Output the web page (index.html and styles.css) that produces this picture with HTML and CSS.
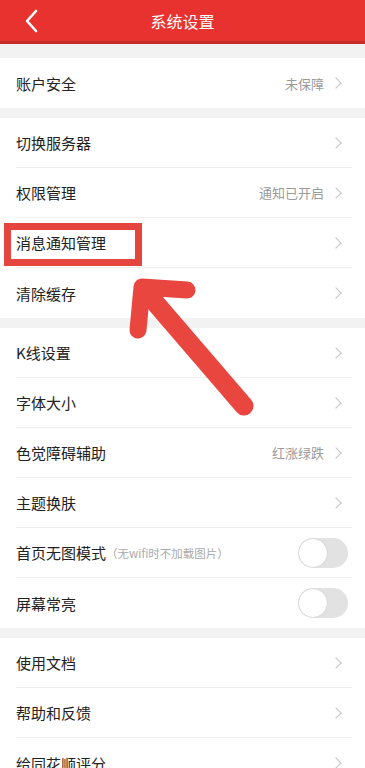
FILE: index.html
```html
<!DOCTYPE html>
<html lang="zh">
<head>
<meta charset="utf-8">
<link rel="stylesheet" href="styles.css">
</head>
<body>
<div class="page">
  <header class="topbar">
    <svg class="back" width="14" height="24" viewBox="0 0 14 24"><path d="M12 2 L3 12 L12 22" fill="none" stroke="#fff" stroke-width="2.6" stroke-linecap="round" stroke-linejoin="round"/></svg>
    <div class="title">系统设置</div>
  </header>

  <section class="group">
    <div class="row"><span class="label">账户安全</span><span class="value">未保障</span><span class="chev"></span></div>
  </section>

  <section class="group">
    <div class="row"><span class="label">切换服务器</span><span class="chev"></span></div>
    <div class="row"><span class="label">权限管理</span><span class="value">通知已开启</span><span class="chev"></span></div>
    <div class="row"><span class="label">消息通知管理</span><span class="chev"></span></div>
    <div class="row"><span class="label">清除缓存</span><span class="chev"></span></div>
  </section>

  <section class="group">
    <div class="row"><span class="label">K线设置</span><span class="chev"></span></div>
    <div class="row"><span class="label">字体大小</span><span class="chev"></span></div>
    <div class="row"><span class="label">色觉障碍辅助</span><span class="value">红涨绿跌</span><span class="chev"></span></div>
    <div class="row"><span class="label">主题换肤</span><span class="chev"></span></div>
    <div class="row"><span class="label">首页无图模式<small class="hint">（无wifi时不加载图片）</small></span><span class="toggle"></span></div>
    <div class="row"><span class="label">屏幕常亮</span><span class="toggle"></span></div>
  </section>

  <section class="group">
    <div class="row"><span class="label">使用文档</span><span class="chev"></span></div>
    <div class="row"><span class="label">帮助和反馈</span><span class="chev"></span></div>
    <div class="row"><span class="label">给同花顺评分</span><span class="chev"></span></div>
  </section>

  <div class="highlight"></div>
  <svg class="arrow" width="365" height="768" viewBox="0 0 365 768">
    <g fill="none" stroke="#e8463f" stroke-linecap="round" stroke-linejoin="round">
      <path d="M244 406 L146 292" stroke-width="19"/>
      <path d="M187 290 L142 287 L138 330" stroke-width="17"/>
    </g>
  </svg>
</div>
</body>
</html>
```

FILE: styles.css
```css
* { box-sizing: border-box; }
html, body { margin: 0; padding: 0; }
body {
  background: #f2f2f2;
  font-family: "Noto Sans CJK SC", "Noto Sans", sans-serif;
  width: 365px;
  height: 768px;
  overflow: hidden;
}
.page { position: relative; }
.topbar {
  height: 44px;
  background: #e8322f;
  border-bottom: 3px solid #c32c2a;
  display: flex;
  align-items: center;
  justify-content: center;
  position: relative;
}
.back {
  position: absolute;
  left: 24px;
  top: 9px;
}
.title {
  color: #fff;
  font-size: 16px;
  line-height: 20px;
}
.group {
  background: #fff;
  margin-top: 10px;
}
.group:first-of-type { margin-top: 14px; }
.row {
  height: 50px;
  display: flex;
  align-items: center;
  margin-left: 16px;
  margin-right: 13px;
  padding-right: 4px;
  border-bottom: 1px solid #efefef;
}
.group .row:last-child { border-bottom: none; }
.label {
  flex: 1;
  font-size: 15px;
  color: #222;
  display: flex;
  align-items: center;
}
.hint {
  font-size: 11.5px;
  color: #aaa;
  margin-left: 0;
}
.value {
  font-size: 13px;
  color: #9a9a9a;
  margin-right: 8px;
}
.chev {
  width: 8px;
  height: 8px;
  border-top: 1.5px solid #c4c4c4;
  border-right: 1.5px solid #c4c4c4;
  transform: rotate(45deg);
  margin-right: 8px;
}
.toggle {
  width: 50px;
  height: 30px;
  border-radius: 15px;
  background: #e2e2e2;
  position: relative;
}
.toggle::after {
  content: "";
  position: absolute;
  left: 1px;
  top: 1px;
  width: 28px;
  height: 28px;
  border-radius: 50%;
  background: #fff;
  box-shadow: 0 0 1px rgba(0,0,0,0.25);
}
.highlight {
  position: absolute;
  left: 4px;
  top: 223px;
  width: 138px;
  height: 43px;
  border: 7px solid #e5453f;
}
.arrow {
  position: absolute;
  left: 0;
  top: 0;
}
```
